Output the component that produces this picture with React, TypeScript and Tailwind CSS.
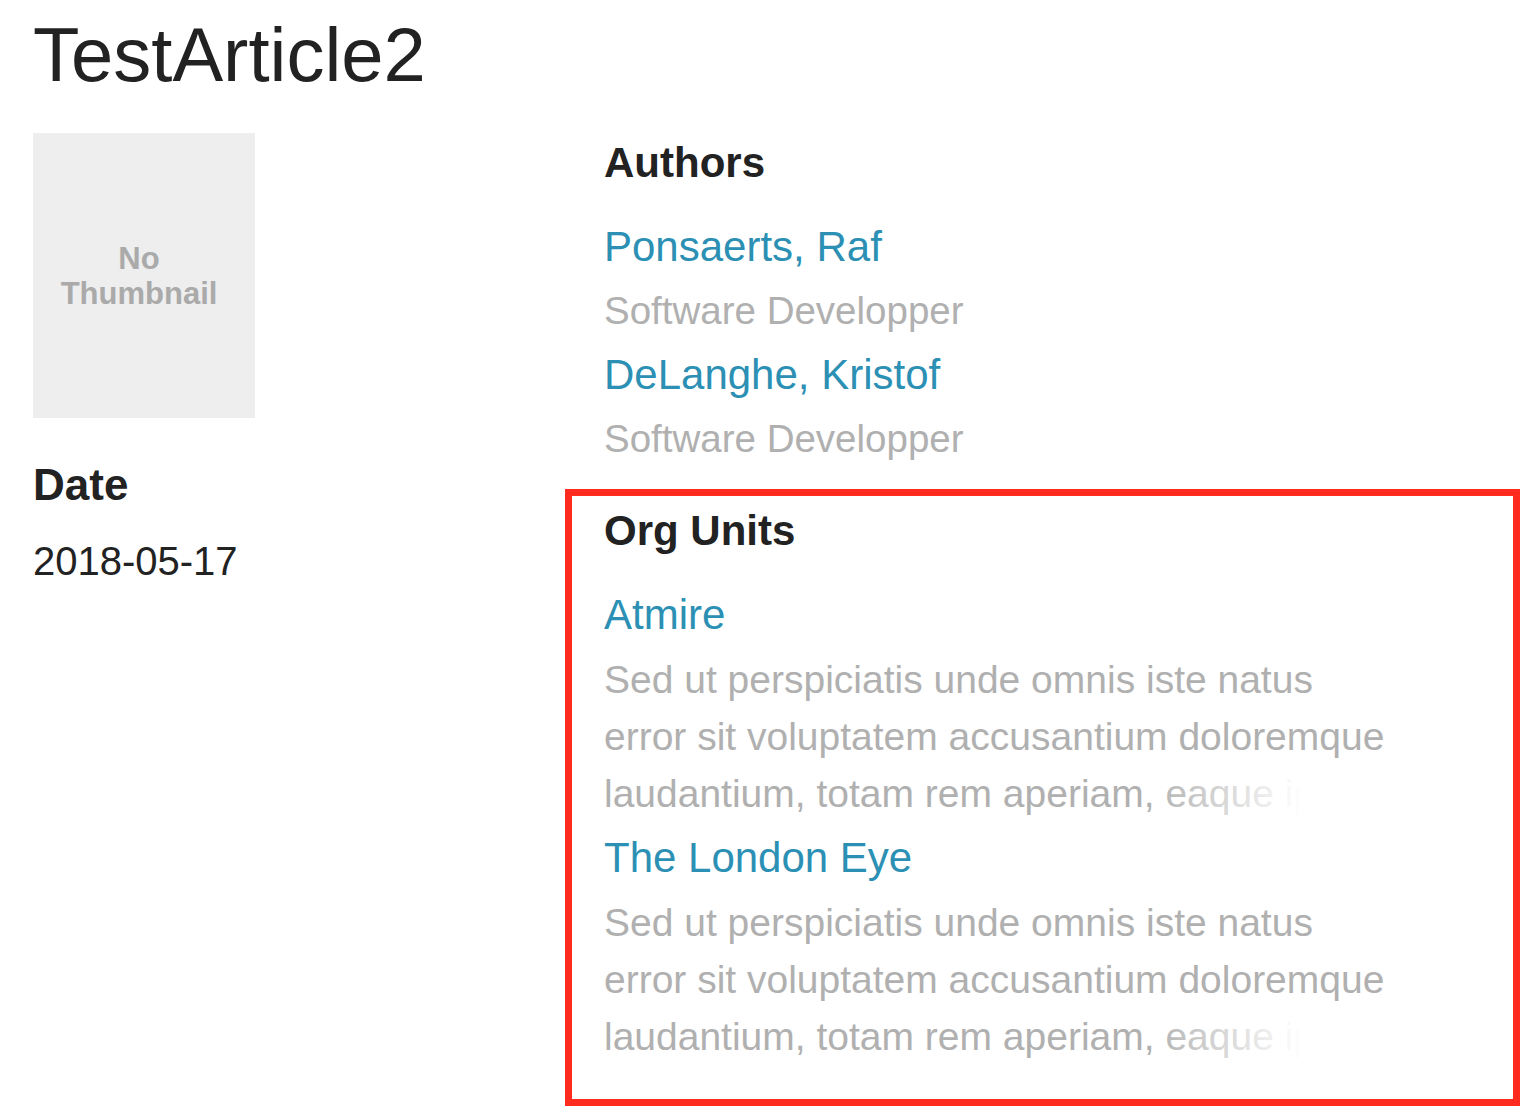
import React from 'react';

const authors = [
  { name: 'Ponsaerts, Raf', role: 'Software Developper' },
  { name: 'DeLanghe, Kristof', role: 'Software Developper' },
];

// only what fits in the three visible lines
const lorem =
  'Sed ut perspiciatis unde omnis iste natus error sit voluptatem accusantium doloremque laudantium, totam rem aperiam, eaque ipsa';

const orgUnits = [
  { name: 'Atmire', description: lorem },
  { name: 'The London Eye', description: lorem },
];

function Truncated({ text }: { text: string }) {
  return (
    <div className="relative mt-[4px] mb-[4px] w-[792px] h-[171px] overflow-hidden text-[39px] leading-[57px] text-[#b0b0b0]">
      <p>{text}</p>
      {/* fade on the last visible line */}
      <div className="absolute right-0 top-[114px] h-[57px] w-[248px] bg-[linear-gradient(to_right,rgba(255,255,255,0),#ffffff_62%)]" />
    </div>
  );
}

export default function App() {
  return (
    <div className="min-h-screen bg-white font-['Liberation_Sans',Arial,sans-serif] text-[#222] pt-[17px]">
      {/* Title */}
      <h1 className="pl-[33px] text-[76px] leading-none">TestArticle2</h1>

      <div className="mt-[40px] flex">
        {/* Left column */}
        <div className="w-[565px] shrink-0 pl-[33px]">
          <div className="w-[222px] h-[285px] bg-[#eeeeee] flex items-center justify-center pl-[14px] pr-[24px]">
            <span className="text-center font-bold text-[31px] leading-[35px] text-[#aaaaaa]">
              No Thumbnail
            </span>
          </div>

          <h2 className="mt-[45px] text-[44px] leading-none font-bold">Date</h2>
          <p className="mt-[34px] text-[40px] leading-none">2018-05-17</p>
        </div>

        {/* Right column */}
        <div className="w-[955px] shrink-0">
          <div className="pl-[39px]">
            <h2 className="mt-[9px] text-[42px] leading-none font-bold">Authors</h2>
            <div className="mt-[31px]">
              {authors.map((a) => (
                <div key={a.name}>
                  <a href="#" className="block text-[42px] leading-[64px] text-[#2b90b4]">
                    {a.name}
                  </a>
                  <p className="text-[38.5px] leading-[64px] text-[#b0b0b0]">{a.role}</p>
                </div>
              ))}
            </div>
          </div>

          {/* Org Units (highlighted) */}
          <div className="mt-[18px] border-[7px] border-[#ff2b1e] pl-[32px] pt-[14px] pb-[30px]">
            <h2 className="text-[42px] leading-none font-bold">Org Units</h2>
            <div className="mt-[31px]">
              {orgUnits.map((o) => (
                <div key={o.name}>
                  <a href="#" className="block text-[42px] leading-[64px] text-[#2b90b4]">
                    {o.name}
                  </a>
                  <Truncated text={o.description} />
                </div>
              ))}
            </div>
          </div>
        </div>
      </div>
    </div>
  );
}
